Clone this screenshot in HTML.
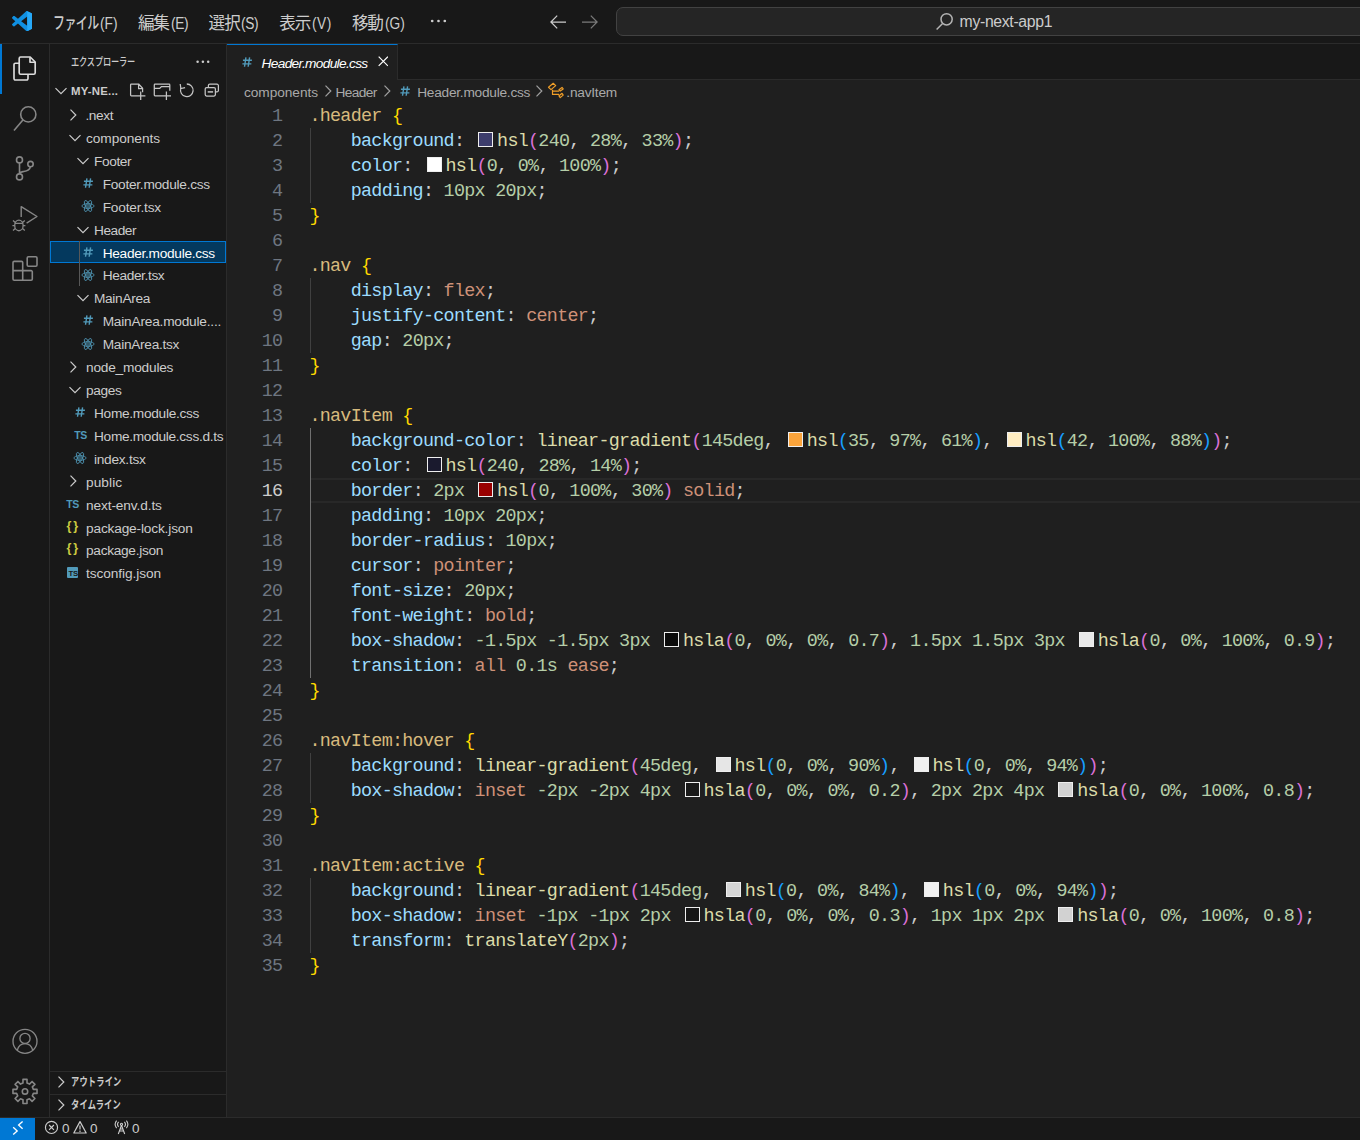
<!DOCTYPE html>
<html lang="ja">
<head>
<meta charset="utf-8">
<title>Header.module.css - my-next-app1 - Visual Studio Code</title>
<style>
*{box-sizing:border-box;margin:0;padding:0}
html,body{width:1360px;height:1140px;overflow:hidden;background:#1f1f1f}
body{position:relative;font-family:"Liberation Sans","Noto Sans CJK JP",sans-serif;font-size:13.5px;color:#cccccc}
svg{display:block}
.abs{position:absolute}
/* ---------- title bar ---------- */
#title{position:absolute;left:0;top:0;width:1360px;height:44px;background:#181818;border-bottom:1px solid #2b2b2b}
#title .menu{position:absolute;top:1.5px;height:43px;line-height:43px;font-size:14.2px;color:#cccccc;white-space:nowrap}
#cmd{position:absolute;left:616px;top:7px;width:760px;height:29px;background:#252525;border:1px solid #424242;border-radius:7px}
#cmd span{position:absolute;left:342px;top:0;line-height:28px;font-size:15.8px;color:#cccccc}
/* ---------- activity bar ---------- */
#act{position:absolute;left:0;top:44px;width:50px;height:1073px;background:#181818;border-right:1px solid #2b2b2b}
#act .on{position:absolute;left:0;top:0;width:2px;height:50px;background:#0078d4}
/* ---------- side bar ---------- */
#side{position:absolute;left:50px;top:44px;width:177px;height:1073px;background:#181818;border-right:1px solid #2b2b2b;overflow:hidden}
#side .hd{position:absolute;left:21px;top:0;line-height:36px;font-size:11.4px;color:#cccccc}
.row{position:absolute;left:0;width:176px;height:22.917px;line-height:23px;font-size:13.7px;color:#cccccc;white-space:nowrap}
.row .t{position:absolute;top:1px}
.row.sel{background:#04395e;outline:1px solid #0078d4;outline-offset:-1px;color:#fff}
.pane{position:absolute;left:0;width:176px;height:23px;border-top:1px solid #2b2b2b;line-height:21px;font-size:11.4px;font-weight:bold;color:#cccccc}
.sec{font-size:11.4px;font-weight:bold;line-height:23px;color:#cccccc}
.tsi{font-size:10.5px;font-weight:bold;color:#519aba;line-height:23px;letter-spacing:-0.3px}
.jsi{font-size:12.500px;font-weight:bold;color:#cbcb41;line-height:20.500px;letter-spacing:2px}
.tcf{width:11.500px;height:11.700px;background:#519aba;border-radius:1px}
.tcf span{position:absolute;left:1.700px;top:3.700px;font-size:7.800px;font-weight:bold;color:#181818;line-height:8px;letter-spacing:-0.300px}
#title .ka,#title .kj{font-size:16.6px}
#title .la{font-size:16px}
/* ---------- editor ---------- */
#tabs{position:absolute;left:227px;top:44px;width:1133px;height:36px;background:#181818;border-bottom:1px solid #2b2b2b}
#tab{position:absolute;left:0;top:0;width:171px;height:36px;background:#1f1f1f;border-top:1px solid #0078d4;border-right:1px solid #2b2b2b}
#tab .nm{position:absolute;left:33px;top:1px;line-height:36px;font-size:13.7px;font-style:italic;color:#ffffff;white-space:nowrap}
#crumbs{position:absolute;left:227px;top:80px;width:1133px;height:23px;background:#1f1f1f;font-size:13.7px;color:#a9a9a9;line-height:24px;white-space:nowrap}
#crumbs span{position:absolute;top:1px}
#code{position:absolute;left:227px;top:103px;width:1133px;font-family:"Liberation Mono",monospace;font-size:18.4px;letter-spacing:-0.715px;color:#cccccc}
.ln{position:relative;height:25px;line-height:26px;white-space:pre}
.ln .num{position:absolute;left:0;top:1px;width:55.4px;text-align:right;color:#6e7681}
.ln .tx{position:absolute;left:82.4px;top:1px}
.ln.cur .num{color:#cccccc}
.ln.cur:before{content:"";box-sizing:border-box;position:absolute;left:84px;right:0;top:0;height:25px;border-top:2px solid #282828;border-bottom:2px solid #282828}
.g{position:absolute;left:0.7px;top:-1px;width:1px;height:25px;background:#404040}
.g.a{background:#707070}
.s{color:#d7ba7d}.p{color:#9cdcfe}.n{color:#b5cea8}.k{color:#ce9178}.f{color:#dcdcaa}
.b0{color:#ffd700}.b1{color:#da70d6}.b2{color:#179fff}
.sw{display:inline-block;width:15px;height:15px;border:1px solid #eeeeee;margin:0 3.75px 0 3.75px;vertical-align:-1px;letter-spacing:0}
/* ---------- status bar ---------- */
#status{position:absolute;left:0;top:1117px;width:1360px;height:23px;background:#181818;border-top:1px solid #2b2b2b;font-size:13.5px;color:#cccccc;line-height:21px}
#remote{position:absolute;left:0;top:0;width:35px;height:22px;background:#0078d4}
#title .la{transform:scaleX(0.86);transform-origin:0 50%}
#exh,#m1a{font-weight:500}
#exh,#m1a,#p1,#p2{transform:scaleX(0.72);transform-origin:0 50%;white-space:nowrap}
#cc{letter-spacing:-0.335px;margin-left:0.6px}
#sec{letter-spacing:0.206px;margin-left:0px}
#r1{letter-spacing:-0.36px;margin-left:-0.6px}
#r2{letter-spacing:-0.06px;margin-left:0px}
#r3{letter-spacing:-0.396px;margin-left:0px}
#r4{letter-spacing:-0.271px;margin-left:0.7px}
#r5{letter-spacing:-0.18px;margin-left:0.7px}
#r6{letter-spacing:-0.468px;margin-left:0px}
#r7{letter-spacing:-0.293px;margin-left:0.7px}
#r8{letter-spacing:-0.38px;margin-left:0.7px}
#r9{letter-spacing:-0.321px;margin-left:0px}
#r10{letter-spacing:-0.215px;margin-left:0.7px}
#r11{letter-spacing:-0.286px;margin-left:0.7px}
#r12{letter-spacing:-0.213px;margin-left:0px}
#r13{letter-spacing:-0.36px;margin-left:0px}
#r14{letter-spacing:-0.296px;margin-left:0px}
#r15{letter-spacing:-0.307px;margin-left:0px}
#r16{letter-spacing:-0.27px;margin-left:0px}
#r17{letter-spacing:0.072px;margin-left:0px}
#r18{letter-spacing:-0.12px;margin-left:0px}
#r19{letter-spacing:-0.169px;margin-left:0px}
#r20{letter-spacing:-0.295px;margin-left:0px}
#r21{letter-spacing:-0.074px;margin-left:0px}
#tn{letter-spacing:-0.676px;margin-left:1.6px}
#c1{letter-spacing:-0.06px;margin-left:0px}
#c2{letter-spacing:-0.612px;margin-left:0px}
#c3{letter-spacing:-0.247px;margin-left:-0.8px}
#c4{letter-spacing:-0.232px;margin-left:-0.7px}
#m2a{letter-spacing:-1.35px;margin-left:0px}
#m3a{letter-spacing:-0.99px;margin-left:0px}
#m4a{letter-spacing:-1.26px;margin-left:0px}
#m5a{letter-spacing:-1.35px;margin-left:0px}
#m1a{letter-spacing:-0.72px;margin-left:-1.0px}
#exh{letter-spacing:-0.206px;margin-left:0px}
#p1{letter-spacing:0.288px;margin-left:0px}
#p2{letter-spacing:0.288px;margin-left:0px}
#m1b{letter-spacing:0px;margin-left:0px}
#m2b{letter-spacing:-0.45px;margin-left:0px}
#m3b{letter-spacing:-0.45px;margin-left:0px}
#m4b{letter-spacing:0.54px;margin-left:0px}
#m5b{letter-spacing:0px;margin-left:0px}

</style>
</head>
<body>
<div id="title">
<svg class="abs" style="left:11.900px;top:10.700px" width="20.300" height="20.300" viewBox="0 0 100 100"><path fill="#1090e2" fill-rule="evenodd" d="M70.9119 99.3171C72.4869 99.9307 74.2828 99.8914 75.8725 99.1264L96.4608 89.2197C98.6242 88.1787 100 85.9892 100 83.5872V16.4133C100 14.0113 98.6243 11.8218 96.4609 10.7808L75.8725 0.873756C73.7862 -0.130129 71.3446 0.11576 69.5135 1.44695C69.252 1.63711 69.0028 1.84943 68.769 2.08341L29.3551 38.0415L12.1872 25.0096C10.589 23.7965 8.35363 23.8959 6.86933 25.2461L1.36303 30.2549C-0.452552 31.9064 -0.454633 34.7627 1.35853 36.417L16.2471 50.0001L1.35853 63.5832C-0.454633 65.2374 -0.452552 68.0938 1.36303 69.7453L6.86933 74.7541C8.35363 76.1043 10.589 76.2037 12.1872 74.9905L29.3551 61.9587L68.769 97.9167C69.3925 98.5406 70.1246 99.0104 70.9119 99.3171ZM75.0152 27.2989L45.1091 50.0001L75.0152 72.7012V27.2989Z"/><path fill="#27a9f8" d="M75.87.87l20.59 9.91C98.62 11.82 100 14.01 100 16.41v67.18c0 2.4-1.38 4.59-3.54 5.63l-20.59 9.91c-1.6.76-3.4.8-4.96.19 2.3.9 4.1-.9 4.1-2.9V3.6c0-2-1.9-3.8-4.1-2.9 1.5-.6 3.4-.6 4.96.17z"/></svg>
<span class="menu ka" id="m1a" style="left:54px">ファイル</span><span class="menu la" id="m1b" style="left:99.7px">(F)</span>
<span class="menu kj" id="m2a" style="left:137.9px">編集</span><span class="menu la" id="m2b" style="left:170.5px">(E)</span>
<span class="menu kj" id="m3a" style="left:208.6px">選択</span><span class="menu la" id="m3b" style="left:241.3px">(S)</span>
<span class="menu kj" id="m4a" style="left:279.3px">表示</span><span class="menu la" id="m4b" style="left:311.8px">(V)</span>
<span class="menu kj" id="m5a" style="left:352px">移動</span><span class="menu la" id="m5b" style="left:384.5px">(G)</span>
<svg class="abs" style="left:429px;top:18px" width="20" height="6" viewBox="0 0 20 6"><g fill="#cccccc"><circle cx="3.2" cy="3" r="1.35"/><circle cx="9.5" cy="3" r="1.35"/><circle cx="15.8" cy="3" r="1.35"/></g></svg>
<svg class="abs" style="left:549px;top:12.600px" width="18" height="18" viewBox="0 0 18 18"><path d="M8.200 2.600L1.900 9l6.300 6.400M2 9h15" fill="none" stroke="#cccccc" stroke-width="1.250"/></svg>
<svg class="abs" style="left:581px;top:12.600px" width="18" height="18" viewBox="0 0 18 18"><path d="M9.800 2.600L16.100 9l-6.300 6.400M16 9H1" fill="none" stroke="#7a7a7a" stroke-width="1.250"/></svg>
<div id="cmd"><svg class="abs" style="left:318px;top:4px" width="19" height="19" viewBox="0 0 19 19"><circle cx="11.6" cy="7.3" r="5.6" fill="none" stroke="#b4b4b4" stroke-width="1.5"/><path d="M7.6 11.4L1.6 17.6" stroke="#b4b4b4" stroke-width="1.5"/></svg><span id="cc">my-next-app1</span></div>

</div>
<div id="act"><div class="on"></div>
<svg class="abs" style="left:0;top:0" width="50" height="260" viewBox="0 44 50 260" fill="none" stroke="#868686" stroke-width="1.6" stroke-linejoin="round">
<g stroke="#dcdcdc" stroke-width="1.650">
<path d="M20.6 57h9.6l5 5v10.8a1.4 1.4 0 0 1-1.4 1.4H20.6a1.4 1.4 0 0 1-1.4-1.4V58.4a1.4 1.4 0 0 1 1.4-1.4z"/>
<path d="M30 57.2v5h5"/>
<path d="M19 63.2h-3.6a1.4 1.4 0 0 0-1.4 1.4v14a1.4 1.4 0 0 0 1.4 1.4h11.2a1.4 1.4 0 0 0 1.4-1.4v-4.2"/>
</g>
<circle cx="28.3" cy="114.4" r="7.6"/>
<path d="M22.9 120L14 130.4"/>
<circle cx="19.5" cy="159.9" r="3"/><circle cx="30.5" cy="164.1" r="2.7"/><circle cx="19.5" cy="176.9" r="3"/>
<path d="M19.5 163v10.8M30.3 166.9c-.6 4.2-4.6 4.3-7.3 4.7-1.9.3-3.3 1-3.5 2.3"/>
<path d="M21.200 217v-10.400l15.800 9.900-10.400 6.600" stroke-width="1.400"/>
<g stroke-width="1.35"><ellipse cx="18.9" cy="225.4" rx="4.2" ry="5.3"/><path d="M14.9 223.4h8M12.4 225.6h2.4M23 225.6h2.4M13 220.6l2.3 2M24.8 220.6l-2.3 2M13 230.6l2.3-2M24.8 230.6l-2.3-2"/></g>
<path d="M22.7 270.6v-8a1.2 1.2 0 0 0-1.2-1.2h-7.3a1.2 1.2 0 0 0-1.2 1.2v16.4a1.2 1.2 0 0 0 1.2 1.2h16.9a1.2 1.2 0 0 0 1.2-1.2v-7.2a1.2 1.2 0 0 0-1.2-1.2H13M22.7 270.6v9.6"/>
<rect x="27.2" y="256.8" width="9.8" height="9.4" rx="1.2"/>
</svg>
<svg class="abs" style="left:0;top:970px" width="50" height="104" viewBox="0 1014 50 104" fill="none" stroke="#868686" stroke-width="1.6" stroke-linejoin="round">
<g stroke-width="1.350"><circle cx="25" cy="1041.300" r="12"/><circle cx="25" cy="1038.400" r="5.100"/><path d="M17.3 1050.2c1-4 4-6.600 7.700-6.600s6.700 2.600 7.700 6.600"/></g>
<circle cx="25" cy="1091.4" r="2.7"/>
<path d="M22.99 1083.04 L22.99 1079.37 L27.01 1079.37 L27.01 1083.04 L29.49 1084.07 L32.08 1081.47 L34.93 1084.32 L32.33 1086.91 L33.36 1089.39 L37.03 1089.39 L37.03 1093.41 L33.36 1093.41 L32.33 1095.89 L34.93 1098.48 L32.08 1101.33 L29.49 1098.73 L27.01 1099.76 L27.01 1103.43 L22.99 1103.43 L22.99 1099.76 L20.51 1098.73 L17.92 1101.33 L15.07 1098.48 L17.67 1095.89 L16.64 1093.41 L12.97 1093.41 L12.97 1089.39 L16.64 1089.39 L17.67 1086.91 L15.07 1084.32 L17.92 1081.47 L20.51 1084.07Z"/>
</svg>

</div>
<div id="side">
<span class="hd" id="exh">エクスプローラー</span>
<svg class="abs" style="left:145px;top:15px" width="16" height="6" viewBox="0 0 16 6"><g fill="#cccccc"><circle cx="2.600" cy="2.700" r="1.250"/><circle cx="7.900" cy="2.700" r="1.250"/><circle cx="13.200" cy="2.700" r="1.250"/></g></svg>
<svg class="abs" style="left:3.6px;top:41px" width="14" height="12" viewBox="0 0 14 12"><path d="M1.500 3.200L7 8.700l5.500-5.500" fill="none" stroke="#cccccc" stroke-width="1.200"/></svg>
<span class="abs sec" id="sec" style="left:21px;top:36px">MY-NE...</span>
<svg class="abs" style="left:78px;top:36px" width="96" height="22" viewBox="128 80 96 22" fill="none" stroke="#c5c5c5" stroke-width="1.250">
<path d="M137.600 95.800H131.300a.7.700 0 0 1-.7-.7V84.700a.7.700 0 0 1 .7-.7h7.500l3.800 4.300v3.900M138.600 84.200v4.300h4M136.200 95.800h9.200M140.700 91.600v8.400"/>
<path d="M162.200 95.800H155a.7.700 0 0 1-.7-.7V84.900a.7.700 0 0 1 .7-.7h14.100a.7.700 0 0 1 .7.700v5.800M154.500 88.400h5.200l1.700-1.900h8.200M162 95.800h9M166.400 91.600v8.400"/>
<path d="M186.800 84a6.300 6.300 0 1 1-6 4.400M180.200 84l.7 4.500 4.200-.8"/>
<path d="M208.400 87.400V85.600a1.400 1.400 0 0 1 1.400-1.400h7.200a1.400 1.400 0 0 1 1.400 1.400v4.800a1.400 1.400 0 0 1-1.400 1.400h-1.500"/><rect x="205.200" y="87.600" width="10.200" height="8.400" rx="1.400"/><path d="M207.700 91.900h5.400" stroke-width="1.500"/>
</svg>
<div class="row" style="top:59.00px"><svg class="abs" style="left:17px;top:4.5px" width="12" height="14" viewBox="0 0 12 14"><path d="M3.500 1.700L8.800 7l-5.300 5.300" fill="none" stroke="#cccccc" stroke-width="1.200"/></svg><span class="t" id="r1" style="left:36px">.next</span></div>
<div class="row" style="top:81.92px"><svg class="abs" style="left:17.5px;top:6px" width="14" height="12" viewBox="0 0 14 12"><path d="M1.500 3.200L7 8.700l5.500-5.500" fill="none" stroke="#cccccc" stroke-width="1.200"/></svg><span class="t" id="r2" style="left:36px">components</span></div>
<div class="row" style="top:104.83px"><svg class="abs" style="left:25.5px;top:6px" width="14" height="12" viewBox="0 0 14 12"><path d="M1.500 3.200L7 8.700l5.500-5.500" fill="none" stroke="#cccccc" stroke-width="1.200"/></svg><span class="t" id="r3" style="left:44px">Footer</span></div>
<div class="row" style="top:127.75px"><svg class="abs" style="left:33.4px;top:6px" width="10.300" height="10.300" viewBox="0 0 11 11"><path d="M4.200.4L2.700 10.400M8.100.4L6.600 10.400M1 3.500h9.600M.4 7.300h9.600" fill="none" stroke="#519aba" stroke-width="1.500"/></svg><span class="t" id="r4" style="left:52px">Footer.module.css</span></div>
<div class="row" style="top:150.67px"><svg class="abs" style="left:31.4px;top:4.5px" width="14" height="14" viewBox="-7 -7 14 14" fill="none" stroke="#519aba" stroke-width="0.800"><ellipse rx="6.100" ry="2.350"/><ellipse rx="6.100" ry="2.350" transform="rotate(60)"/><ellipse rx="6.100" ry="2.350" transform="rotate(120)"/><circle r="1.300"/></svg><span class="t" id="r5" style="left:52px">Footer.tsx</span></div>
<div class="row" style="top:173.59px"><svg class="abs" style="left:25.5px;top:6px" width="14" height="12" viewBox="0 0 14 12"><path d="M1.500 3.200L7 8.700l5.500-5.500" fill="none" stroke="#cccccc" stroke-width="1.200"/></svg><span class="t" id="r6" style="left:44px">Header</span></div>
<div class="row sel" style="top:196.50px"><svg class="abs" style="left:33.4px;top:6px" width="10.300" height="10.300" viewBox="0 0 11 11"><path d="M4.200.4L2.700 10.400M8.100.4L6.600 10.400M1 3.500h9.600M.4 7.300h9.600" fill="none" stroke="#519aba" stroke-width="1.500"/></svg><span class="t" id="r7" style="left:52px">Header.module.css</span></div>
<div class="row" style="top:219.42px"><svg class="abs" style="left:31.4px;top:4.5px" width="14" height="14" viewBox="-7 -7 14 14" fill="none" stroke="#519aba" stroke-width="0.800"><ellipse rx="6.100" ry="2.350"/><ellipse rx="6.100" ry="2.350" transform="rotate(60)"/><ellipse rx="6.100" ry="2.350" transform="rotate(120)"/><circle r="1.300"/></svg><span class="t" id="r8" style="left:52px">Header.tsx</span></div>
<div class="row" style="top:242.34px"><svg class="abs" style="left:25.5px;top:6px" width="14" height="12" viewBox="0 0 14 12"><path d="M1.500 3.200L7 8.700l5.500-5.500" fill="none" stroke="#cccccc" stroke-width="1.200"/></svg><span class="t" id="r9" style="left:44px">MainArea</span></div>
<div class="row" style="top:265.25px"><svg class="abs" style="left:33.4px;top:6px" width="10.300" height="10.300" viewBox="0 0 11 11"><path d="M4.200.4L2.700 10.400M8.100.4L6.600 10.400M1 3.500h9.600M.4 7.300h9.600" fill="none" stroke="#519aba" stroke-width="1.500"/></svg><span class="t" id="r10" style="left:52px">MainArea.module....</span></div>
<div class="row" style="top:288.17px"><svg class="abs" style="left:31.4px;top:4.5px" width="14" height="14" viewBox="-7 -7 14 14" fill="none" stroke="#519aba" stroke-width="0.800"><ellipse rx="6.100" ry="2.350"/><ellipse rx="6.100" ry="2.350" transform="rotate(60)"/><ellipse rx="6.100" ry="2.350" transform="rotate(120)"/><circle r="1.300"/></svg><span class="t" id="r11" style="left:52px">MainArea.tsx</span></div>
<div class="row" style="top:311.09px"><svg class="abs" style="left:17px;top:4.5px" width="12" height="14" viewBox="0 0 12 14"><path d="M3.500 1.700L8.800 7l-5.300 5.300" fill="none" stroke="#cccccc" stroke-width="1.200"/></svg><span class="t" id="r12" style="left:36px">node_modules</span></div>
<div class="row" style="top:334.00px"><svg class="abs" style="left:17.5px;top:6px" width="14" height="12" viewBox="0 0 14 12"><path d="M1.500 3.200L7 8.700l5.500-5.500" fill="none" stroke="#cccccc" stroke-width="1.200"/></svg><span class="t" id="r13" style="left:36px">pages</span></div>
<div class="row" style="top:356.92px"><svg class="abs" style="left:25.4px;top:6px" width="10.300" height="10.300" viewBox="0 0 11 11"><path d="M4.200.4L2.700 10.400M8.100.4L6.600 10.400M1 3.500h9.600M.4 7.300h9.600" fill="none" stroke="#519aba" stroke-width="1.500"/></svg><span class="t" id="r14" style="left:44px">Home.module.css</span></div>
<div class="row" style="top:379.84px"><span class="abs tsi" style="left:24.2px;top:0px">TS</span><span class="t" id="r15" style="left:44px">Home.module.css.d.ts</span></div>
<div class="row" style="top:402.75px"><svg class="abs" style="left:23.4px;top:4.5px" width="14" height="14" viewBox="-7 -7 14 14" fill="none" stroke="#519aba" stroke-width="0.800"><ellipse rx="6.100" ry="2.350"/><ellipse rx="6.100" ry="2.350" transform="rotate(60)"/><ellipse rx="6.100" ry="2.350" transform="rotate(120)"/><circle r="1.300"/></svg><span class="t" id="r16" style="left:44px">index.tsx</span></div>
<div class="row" style="top:425.67px"><svg class="abs" style="left:17px;top:4.5px" width="12" height="14" viewBox="0 0 12 14"><path d="M3.500 1.700L8.800 7l-5.300 5.300" fill="none" stroke="#cccccc" stroke-width="1.200"/></svg><span class="t" id="r17" style="left:36px">public</span></div>
<div class="row" style="top:448.59px"><span class="abs tsi" style="left:16.2px;top:0px">TS</span><span class="t" id="r18" style="left:36px">next-env.d.ts</span></div>
<div class="row" style="top:471.51px"><span class="abs jsi" style="left:16.4px;top:0px">{}</span><span class="t" id="r19" style="left:36px">package-lock.json</span></div>
<div class="row" style="top:494.42px"><span class="abs jsi" style="left:16.4px;top:0px">{}</span><span class="t" id="r20" style="left:36px">package.json</span></div>
<div class="row" style="top:517.34px"><span class="abs tcf" style="left:16.8px;top:5.3px"><span>TS</span></span><span class="t" id="r21" style="left:36px">tsconfig.json</span></div>
<div class="abs" style="left:29px;top:196.50px;width:1px;height:45.83px;background:#585858"></div>
<div class="pane" style="top:1027px"><svg class="abs" style="left:4.7px;top:2.7px" width="12" height="14" viewBox="0 0 12 14"><path d="M3.500 1.700L8.800 7l-5.300 5.300" fill="none" stroke="#cccccc" stroke-width="1.200"/></svg><span class="abs" id="p1" style="left:21px;top:0">アウトライン</span></div>
<div class="pane" style="top:1050px"><svg class="abs" style="left:4.7px;top:2.7px" width="12" height="14" viewBox="0 0 12 14"><path d="M3.500 1.700L8.800 7l-5.300 5.300" fill="none" stroke="#cccccc" stroke-width="1.200"/></svg><span class="abs" id="p2" style="left:21px;top:0">タイムライン</span></div>
</div>
<div id="tabs"><div id="tab"><svg class="abs" style="left:15.300px;top:12.300px" width="10.300" height="10.300" viewBox="0 0 11 11"><path d="M4.200.4L2.700 10.400M8.100.4L6.600 10.400M1 3.500h9.600M.4 7.300h9.600" fill="none" stroke="#519aba" stroke-width="1.500"/></svg><span class="nm" id="tn">Header.module.css</span><svg class="abs" style="left:150.700px;top:11.200px" width="10.600" height="10.600" viewBox="0 0 11 11"><path d="M.7.700l9.600 9.600M10.300.7L.7 10.300" stroke="#ffffff" stroke-width="1.250"/></svg></div></div>
<div id="crumbs">
<span id="c1" style="left:17px">components</span>
<svg class="abs" style="left:94.49999999999997px;top:3.6px" width="12" height="14" viewBox="0 0 12 14"><path d="M3.500 1.700L8.800 7l-5.300 5.300" fill="none" stroke="#a0a0a0" stroke-width="1.200"/></svg>
<span id="c2" style="left:108.500px">Header</span>
<svg class="abs" style="left:154.1px;top:3.6px" width="12" height="14" viewBox="0 0 12 14"><path d="M3.500 1.700L8.800 7l-5.300 5.300" fill="none" stroke="#a0a0a0" stroke-width="1.200"/></svg>
<svg class="abs" style="left:173.2px;top:6px" width="10.300" height="10.300" viewBox="0 0 11 11"><path d="M4.200.4L2.700 10.400M8.100.4L6.600 10.400M1 3.500h9.600M.4 7.300h9.600" fill="none" stroke="#519aba" stroke-width="1.500"/></svg>
<span id="c3" style="left:191px">Header.module.css</span>
<svg class="abs" style="left:306.4px;top:3.6px" width="12" height="14" viewBox="0 0 12 14"><path d="M3.500 1.700L8.800 7l-5.300 5.300" fill="none" stroke="#a0a0a0" stroke-width="1.200"/></svg>
<svg class="abs" style="left:319px;top:2px" width="20" height="18" viewBox="546 82 20 18" fill="none" stroke="#ee9d28" stroke-width="1.200" stroke-linejoin="round"><path d="M548.500 87.300l4.700-4 2.500 2.300-4.700 4zM552.500 89.700v4.700h6.500M552.500 91.100h6.500M559 89.700l3-2.300 1.200 1.500-3 2.200zM559 95.800l3-2.500 1.200 1.800-3 2.500z"/></svg>
<span id="c4" style="left:340px">.navItem</span>
</div>
<div id="code">
<div class="ln"><span class="num">1</span><span class="tx"><span class="s">.header</span> <span class="b0">{</span></span></div>
<div class="ln"><span class="num">2</span><span class="tx"><b class="g"></b>    <span class="p">background</span>: <i class="sw" style="background:#3d3d6c"></i><span class="f">hsl</span><span class="b1">(</span><span class="n">240</span>, <span class="n">28%</span>, <span class="n">33%</span><span class="b1">)</span>;</span></div>
<div class="ln"><span class="num">3</span><span class="tx"><b class="g"></b>    <span class="p">color</span>: <i class="sw" style="background:#ffffff"></i><span class="f">hsl</span><span class="b1">(</span><span class="n">0</span>, <span class="n">0%</span>, <span class="n">100%</span><span class="b1">)</span>;</span></div>
<div class="ln"><span class="num">4</span><span class="tx"><b class="g"></b>    <span class="p">padding</span>: <span class="n">10px</span> <span class="n">20px</span>;</span></div>
<div class="ln"><span class="num">5</span><span class="tx"><span class="b0">}</span></span></div>
<div class="ln"><span class="num">6</span><span class="tx"></span></div>
<div class="ln"><span class="num">7</span><span class="tx"><span class="s">.nav</span> <span class="b0">{</span></span></div>
<div class="ln"><span class="num">8</span><span class="tx"><b class="g"></b>    <span class="p">display</span>: <span class="k">flex</span>;</span></div>
<div class="ln"><span class="num">9</span><span class="tx"><b class="g"></b>    <span class="p">justify-content</span>: <span class="k">center</span>;</span></div>
<div class="ln"><span class="num">10</span><span class="tx"><b class="g"></b>    <span class="p">gap</span>: <span class="n">20px</span>;</span></div>
<div class="ln"><span class="num">11</span><span class="tx"><span class="b0">}</span></span></div>
<div class="ln"><span class="num">12</span><span class="tx"></span></div>
<div class="ln"><span class="num">13</span><span class="tx"><span class="s">.navItem</span> <span class="b0">{</span></span></div>
<div class="ln"><span class="num">14</span><span class="tx"><b class="g a"></b>    <span class="p">background-color</span>: <span class="f">linear-gradient</span><span class="b1">(</span><span class="n">145deg</span>, <i class="sw" style="background:#fba43b"></i><span class="f">hsl</span><span class="b2">(</span><span class="n">35</span>, <span class="n">97%</span>, <span class="n">61%</span><span class="b2">)</span>, <i class="sw" style="background:#ffedc2"></i><span class="f">hsl</span><span class="b2">(</span><span class="n">42</span>, <span class="n">100%</span>, <span class="n">88%</span><span class="b2">)</span><span class="b1">)</span>;</span></div>
<div class="ln"><span class="num">15</span><span class="tx"><b class="g a"></b>    <span class="p">color</span>: <i class="sw" style="background:#1a1a2e"></i><span class="f">hsl</span><span class="b1">(</span><span class="n">240</span>, <span class="n">28%</span>, <span class="n">14%</span><span class="b1">)</span>;</span></div>
<div class="ln cur"><span class="num">16</span><span class="tx"><b class="g a"></b>    <span class="p">border</span>: <span class="n">2px</span> <i class="sw" style="background:#990000"></i><span class="f">hsl</span><span class="b1">(</span><span class="n">0</span>, <span class="n">100%</span>, <span class="n">30%</span><span class="b1">)</span> <span class="k">solid</span>;</span></div>
<div class="ln"><span class="num">17</span><span class="tx"><b class="g a"></b>    <span class="p">padding</span>: <span class="n">10px</span> <span class="n">20px</span>;</span></div>
<div class="ln"><span class="num">18</span><span class="tx"><b class="g a"></b>    <span class="p">border-radius</span>: <span class="n">10px</span>;</span></div>
<div class="ln"><span class="num">19</span><span class="tx"><b class="g a"></b>    <span class="p">cursor</span>: <span class="k">pointer</span>;</span></div>
<div class="ln"><span class="num">20</span><span class="tx"><b class="g a"></b>    <span class="p">font-size</span>: <span class="n">20px</span>;</span></div>
<div class="ln"><span class="num">21</span><span class="tx"><b class="g a"></b>    <span class="p">font-weight</span>: <span class="k">bold</span>;</span></div>
<div class="ln"><span class="num">22</span><span class="tx"><b class="g a"></b>    <span class="p">box-shadow</span>: <span class="n">-1.5px</span> <span class="n">-1.5px</span> <span class="n">3px</span> <i class="sw" style="background:#0b0b0b"></i><span class="f">hsla</span><span class="b1">(</span><span class="n">0</span>, <span class="n">0%</span>, <span class="n">0%</span>, <span class="n">0.7</span><span class="b1">)</span>, <span class="n">1.5px</span> <span class="n">1.5px</span> <span class="n">3px</span> <i class="sw" style="background:#e9e9e9"></i><span class="f">hsla</span><span class="b1">(</span><span class="n">0</span>, <span class="n">0%</span>, <span class="n">100%</span>, <span class="n">0.9</span><span class="b1">)</span>;</span></div>
<div class="ln"><span class="num">23</span><span class="tx"><b class="g a"></b>    <span class="p">transition</span>: <span class="k">all</span> <span class="n">0.1s</span> <span class="k">ease</span>;</span></div>
<div class="ln"><span class="num">24</span><span class="tx"><span class="b0">}</span></span></div>
<div class="ln"><span class="num">25</span><span class="tx"></span></div>
<div class="ln"><span class="num">26</span><span class="tx"><span class="s">.navItem:hover</span> <span class="b0">{</span></span></div>
<div class="ln"><span class="num">27</span><span class="tx"><b class="g"></b>    <span class="p">background</span>: <span class="f">linear-gradient</span><span class="b1">(</span><span class="n">45deg</span>, <i class="sw" style="background:#e6e6e6"></i><span class="f">hsl</span><span class="b2">(</span><span class="n">0</span>, <span class="n">0%</span>, <span class="n">90%</span><span class="b2">)</span>, <i class="sw" style="background:#f0f0f0"></i><span class="f">hsl</span><span class="b2">(</span><span class="n">0</span>, <span class="n">0%</span>, <span class="n">94%</span><span class="b2">)</span><span class="b1">)</span>;</span></div>
<div class="ln"><span class="num">28</span><span class="tx"><b class="g"></b>    <span class="p">box-shadow</span>: <span class="k">inset</span> <span class="n">-2px</span> <span class="n">-2px</span> <span class="n">4px</span> <i class="sw" style="background:#191919"></i><span class="f">hsla</span><span class="b1">(</span><span class="n">0</span>, <span class="n">0%</span>, <span class="n">0%</span>, <span class="n">0.2</span><span class="b1">)</span>, <span class="n">2px</span> <span class="n">2px</span> <span class="n">4px</span> <i class="sw" style="background:#d2d2d2"></i><span class="f">hsla</span><span class="b1">(</span><span class="n">0</span>, <span class="n">0%</span>, <span class="n">100%</span>, <span class="n">0.8</span><span class="b1">)</span>;</span></div>
<div class="ln"><span class="num">29</span><span class="tx"><span class="b0">}</span></span></div>
<div class="ln"><span class="num">30</span><span class="tx"></span></div>
<div class="ln"><span class="num">31</span><span class="tx"><span class="s">.navItem:active</span> <span class="b0">{</span></span></div>
<div class="ln"><span class="num">32</span><span class="tx"><b class="g"></b>    <span class="p">background</span>: <span class="f">linear-gradient</span><span class="b1">(</span><span class="n">145deg</span>, <i class="sw" style="background:#d6d6d6"></i><span class="f">hsl</span><span class="b2">(</span><span class="n">0</span>, <span class="n">0%</span>, <span class="n">84%</span><span class="b2">)</span>, <i class="sw" style="background:#f0f0f0"></i><span class="f">hsl</span><span class="b2">(</span><span class="n">0</span>, <span class="n">0%</span>, <span class="n">94%</span><span class="b2">)</span><span class="b1">)</span>;</span></div>
<div class="ln"><span class="num">33</span><span class="tx"><b class="g"></b>    <span class="p">box-shadow</span>: <span class="k">inset</span> <span class="n">-1px</span> <span class="n">-1px</span> <span class="n">2px</span> <i class="sw" style="background:#161616"></i><span class="f">hsla</span><span class="b1">(</span><span class="n">0</span>, <span class="n">0%</span>, <span class="n">0%</span>, <span class="n">0.3</span><span class="b1">)</span>, <span class="n">1px</span> <span class="n">1px</span> <span class="n">2px</span> <i class="sw" style="background:#d2d2d2"></i><span class="f">hsla</span><span class="b1">(</span><span class="n">0</span>, <span class="n">0%</span>, <span class="n">100%</span>, <span class="n">0.8</span><span class="b1">)</span>;</span></div>
<div class="ln"><span class="num">34</span><span class="tx"><b class="g"></b>    <span class="p">transform</span>: <span class="f">translateY</span><span class="b1">(</span><span class="n">2px</span><span class="b1">)</span>;</span></div>
<div class="ln"><span class="num">35</span><span class="tx"><span class="b0">}</span></span></div>
</div>
<div id="status"><div id="remote"></div>
<svg class="abs" style="left:10px;top:2px" width="16" height="16" viewBox="0 0 16 16" fill="none" stroke="#ffffff" stroke-width="1.350"><path d="M3.200 7.200l4 3.700-4 3.700M12.600 1.400l-4 3.700 4 3.700"/></svg>
<svg class="abs" style="left:43.7px;top:2px" width="15" height="15" viewBox="0 0 15 15" fill="none" stroke="#cccccc" stroke-width="1.150"><circle cx="7.500" cy="7.400" r="6.050"/><path d="M5.100 5l4.800 4.800M9.900 5l-4.800 4.800"/></svg>
<span class="abs" id="s1" style="left:62px;top:0">0</span>
<svg class="abs" style="left:72px;top:1.500px" width="16" height="15" viewBox="0 0 16 15" fill="none" stroke="#cccccc" stroke-width="1.200" stroke-linejoin="round"><path d="M8 1.600l6.200 11.400H1.800zM8 5.600v4M8 10.400v1.500"/></svg>
<span class="abs" id="s2" style="left:90px;top:0">0</span>
<svg class="abs" style="left:113px;top:1.800px" width="17" height="15" viewBox="0 0 17 15" fill="none" stroke="#cccccc" stroke-width="1.100"><path d="M8.500 5.200L5.300 14M8.500 5.200L11.700 14M6.400 11h4.200M7.100 9h2.800"/><circle cx="8.500" cy="4.300" r="1.100"/><path d="M5.600 1.800a3.800 3.800 0 0 0 0 5M11.400 1.800a3.800 3.800 0 0 1 0 5M3.600.6a6 6 0 0 0 0 7.500M13.400.6a6 6 0 0 1 0 7.500"/></svg>
<span class="abs" id="s3" style="left:132px;top:0">0</span>
</div>
</body>
</html>
